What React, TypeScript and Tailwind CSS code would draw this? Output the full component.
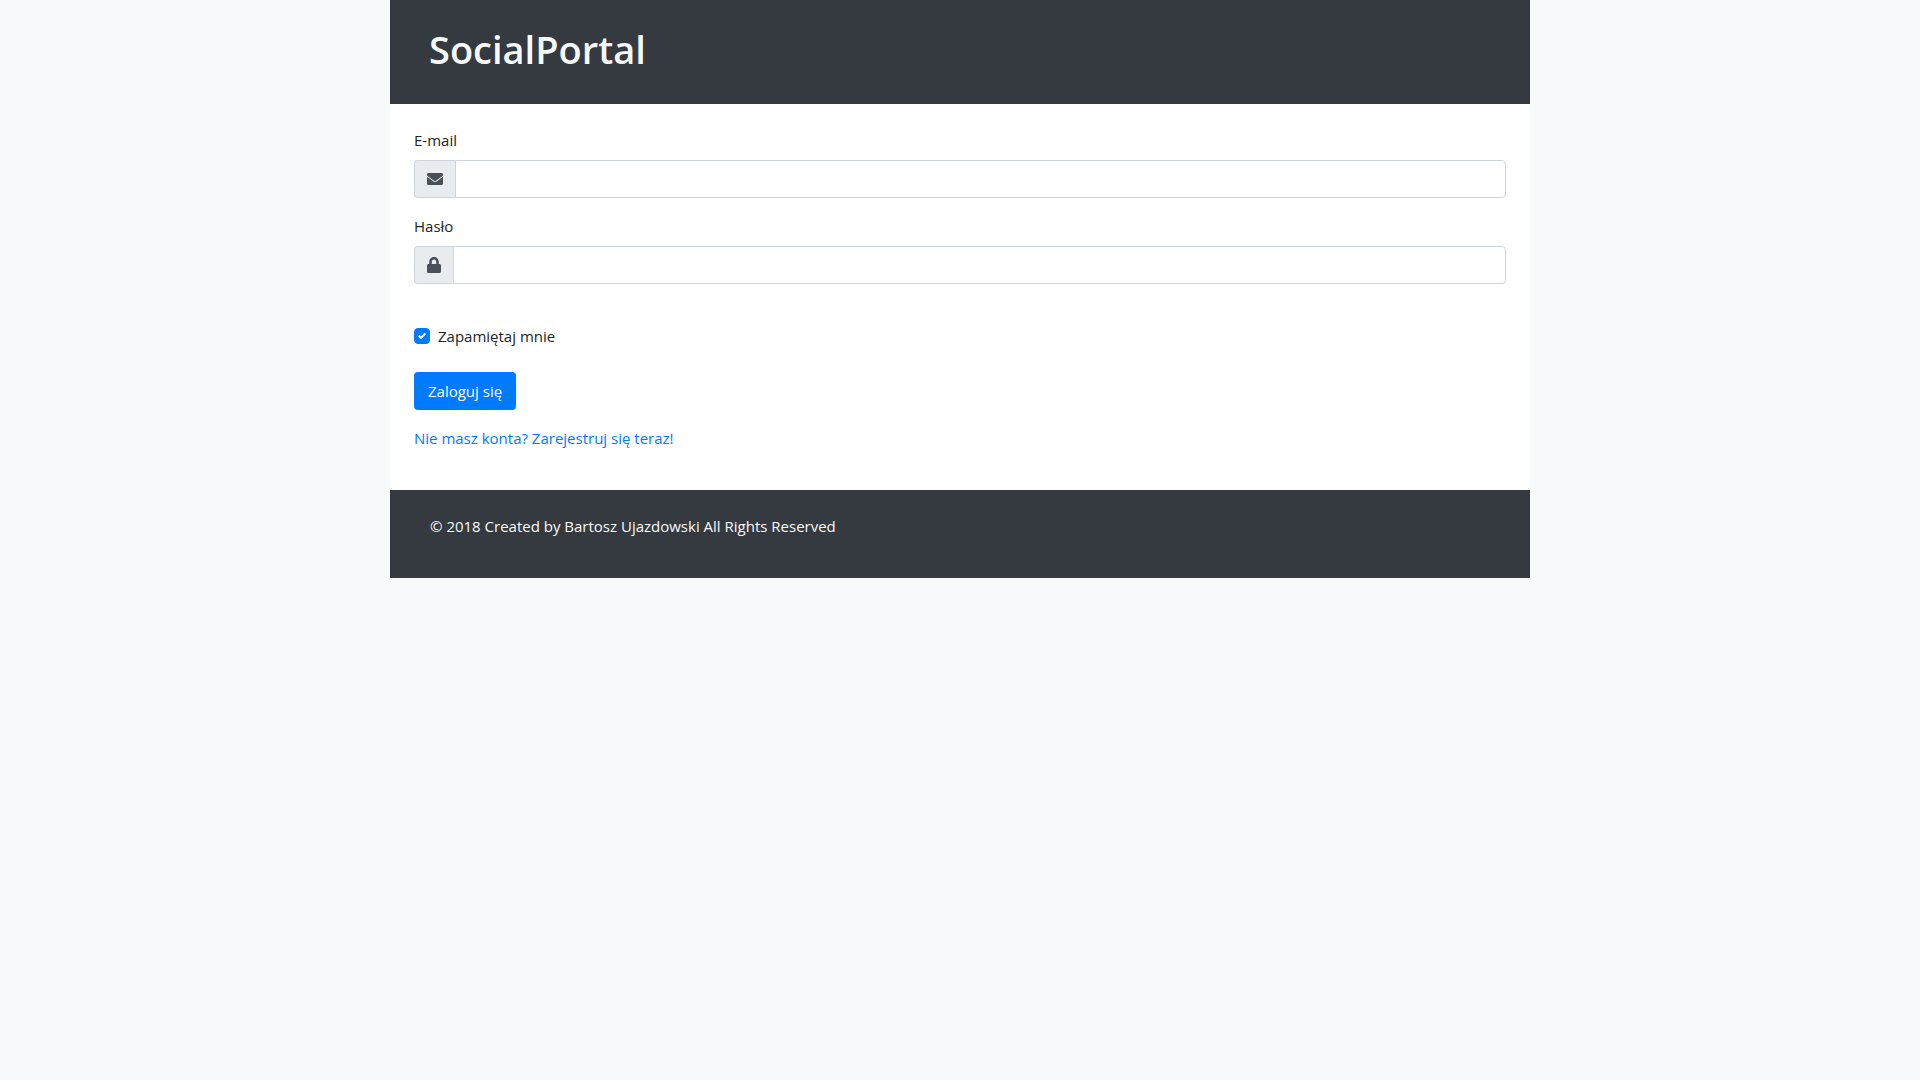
import type { ReactNode } from "react";
import { FaEnvelope, FaLock } from "react-icons/fa";

type FieldProps = {
  id: string;
  label: string;
  type: string;
  icon: ReactNode;
};

function Field({ id, label, type, icon }: FieldProps) {
  return (
    <div className="mb-4">
      <label htmlFor={id} className="mb-2 block">
        {label}
      </label>
      <div className="flex h-[38px]">
        <span className="flex items-center rounded-l border border-r-0 border-[#ced4da] bg-[#e9ecef] px-3 text-[#495057]">
          {icon}
        </span>
        <input
          id={id}
          type={type}
          className="min-w-0 flex-1 rounded-r border border-[#ced4da] bg-white px-3 text-[#495057] outline-none focus:border-[#80bdff]"
        />
      </div>
    </div>
  );
}

export default function App() {
  return (
    <div className="min-h-screen bg-[#f8f9fa] font-['Open_Sans',sans-serif] text-[15px] leading-6 text-[#212529]">
      <div className="mx-auto max-w-[1140px]">
        <header className="bg-[#343a40] px-[39px] py-6 text-[#f8f9fa]">
          <h1 className="mb-1.5 text-[38px] leading-[50px] font-semibold">SocialPortal</h1>
        </header>
        <main className="bg-white px-6 pt-6 pb-10">
          <form onSubmit={(event) => event.preventDefault()}>
            <Field id="email" label="E-mail" type="email" icon={<FaEnvelope className="h-4 w-4" />} />
            <Field id="password" label="Hasło" type="password" icon={<FaLock className="h-4 w-[14px]" />} />
            <div className="mt-10 mb-6 flex items-center">
              <span className="grid h-4 w-4">
                <input
                  id="remember"
                  type="checkbox"
                  defaultChecked
                  className="peer col-start-1 row-start-1 h-4 w-4 appearance-none rounded border border-[#adb5bd] bg-white checked:border-[#007bff] checked:bg-[#007bff]"
                />
                <svg
                  viewBox="0 0 8 8"
                  className="pointer-events-none invisible col-start-1 row-start-1 h-2 w-2 place-self-center fill-white peer-checked:visible"
                  aria-hidden="true"
                >
                  <path d="M6.564.75l-3.59 3.612-1.538-1.55L0 4.26 2.974 7.25 8 2.193z" />
                </svg>
              </span>
              <label htmlFor="remember" className="pl-2">
                Zapamiętaj mnie
              </label>
            </div>
            <button type="submit" className="mb-4 block h-[38px] rounded bg-[#007bff] px-[14px] text-white">
              Zaloguj się
            </button>
          </form>
          <a href="#register" className="inline-block text-[#007bff] hover:underline">
            Nie masz konta? Zarejestruj się teraz!
          </a>
        </main>
        <footer className="bg-[#343a40] px-10 pt-6 pb-10 text-[#f8f9fa]">
          <p>© 2018 Created by Bartosz Ujazdowski All Rights Reserved</p>
        </footer>
      </div>
    </div>
  );
}
